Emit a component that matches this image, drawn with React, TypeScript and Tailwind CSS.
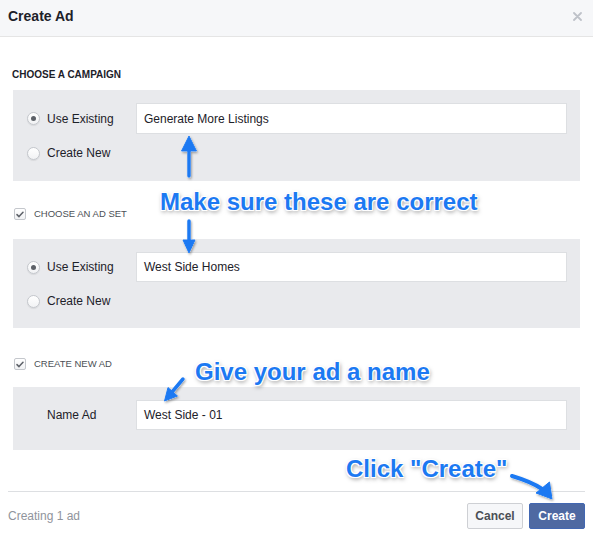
import React from 'react'

function Radio({ checked }: { checked?: boolean }) {
  return (
    <span className="w-[13px] h-[13px] rounded-full border border-[#c4c7cc] bg-gradient-to-b from-white to-[#f1f2f4] shadow-[0_1px_1px_rgba(0,0,0,0.08)] flex items-center justify-center shrink-0">
      {checked && <span className="w-[5px] h-[5px] rounded-full bg-[#5d6168]" />}
    </span>
  )
}

function Check() {
  return (
    <span className="w-[12px] h-[12px] rounded-[2px] border border-[#c4c7cc] bg-gradient-to-b from-white to-[#f1f2f4] flex items-center justify-center shrink-0">
      <svg width="8" height="7" viewBox="0 0 8 7" fill="none">
        <path d="M1 3.6 L3 5.6 L7 1.2" stroke="#5d6168" strokeWidth="1.5" strokeLinecap="round" strokeLinejoin="round" />
      </svg>
    </span>
  )
}

function TextBox({ value, h }: { value: string; h: string }) {
  return (
    <div className={`flex-1 ${h} bg-white border border-[#dddfe2] flex items-center pl-[7px] text-[12px] text-[#1d2129]`}>
      {value}
    </div>
  )
}

function ChoosePanel({ value, h, inputH }: { value: string; h: string; inputH: string }) {
  return (
    <div className={`${h} bg-[#e9eaed] flex pt-[13px] pr-[13px]`}>
      <div className="w-[123px] pl-[14px] flex flex-col text-[12px] text-[#1d2129]">
        <div className={`${inputH} flex items-center gap-[7px]`}>
          <Radio checked />
          <span>Use Existing</span>
        </div>
        <div className="h-[20px] mt-[9px] flex items-center gap-[7px]">
          <Radio />
          <span>Create New</span>
        </div>
      </div>
      <TextBox value={value} h={inputH} />
    </div>
  )
}

const blue = '#1c79f2'
const annotate =
  "absolute whitespace-nowrap text-[24px] leading-[24px] font-bold text-[#1c79f2] [text-shadow:-1px_-1px_0_#fff,1px_-1px_0_#fff,-1px_1px_0_#fff,1px_1px_0_#fff,0_0_3px_#fff,1px_2px_4px_rgba(0,0,0,0.5)]"

function Arrows() {
  const shapes = (
    <>
      <path d="M189 150 L189 176" strokeWidth="3.5" strokeLinecap="round" />
      <polygon points="189,136 181.5,151 196.5,151" />
      <path d="M189 221 L189 242" strokeWidth="3.5" strokeLinecap="round" />
      <polygon points="189,253 183,240 195,240" />
      <path d="M183 379 L172.5 391.5" strokeWidth="3.5" strokeLinecap="round" />
      <polygon points="164.5,401 177.5,396 168,387.5" />
      <path d="M512 476 Q532 482 542 489" strokeWidth="4" strokeLinecap="round" fill="none" />
      <polygon points="552,499 549.5,482 536,493" />
    </>
  )
  return (
    <svg className="absolute inset-0 pointer-events-none" width="593" height="537" viewBox="0 0 593 537">
      <defs>
        <filter id="sh" x="-20%" y="-20%" width="140%" height="140%">
          <feDropShadow dx="1" dy="1.5" stdDeviation="1.2" floodColor="#000" floodOpacity="0.35" />
        </filter>
      </defs>
      <g filter="url(#sh)" stroke="#fff" fill="#fff" strokeLinejoin="round">
        {shapes}
      </g>
      <g stroke={blue} fill={blue}>
        {shapes}
      </g>
    </svg>
  )
}

export default function App() {
  return (
    <div className="relative w-[593px] h-[537px] overflow-hidden bg-white font-['Liberation_Sans',Arial,sans-serif]">
      {/* header */}
      <div className="h-[37px] bg-[#f6f7f9] border-b border-[#e5e5e5] flex items-center justify-between pl-[8px] pr-[10px] pb-[3px]">
        <span className="text-[14px] font-bold text-[#1d2129]">Create Ad</span>
        <svg width="9" height="9" viewBox="0 0 9 9" className="mr-[1px]">
          <path d="M1 1 L8 8 M8 1 L1 8" stroke="#bec2c9" strokeWidth="1.8" strokeLinecap="round" />
        </svg>
      </div>

      {/* body */}
      <div className="px-[13px]">
        <div className="mt-[31px] h-[12px] -ml-[1px] flex items-center text-[10px] font-bold text-[#1d2129]">
          CHOOSE A CAMPAIGN
        </div>
        <div className="mt-[10px]">
          <ChoosePanel value="Generate More Listings" h="h-[91px]" inputH="h-[31px]" />
        </div>

        <div className="mt-[27px] h-[12px] ml-[1px] flex items-center gap-[8px] text-[9.5px] text-[#4b4f56]">
          <Check />
          <span>CHOOSE AN AD SET</span>
        </div>
        <div className="mt-[19px]">
          <ChoosePanel value="West Side Homes" h="h-[89px]" inputH="h-[30px]" />
        </div>

        <div className="mt-[30px] h-[12px] ml-[1px] flex items-center gap-[8px] text-[9.5px] text-[#4b4f56]">
          <Check />
          <span>CREATE NEW AD</span>
        </div>
        <div className="mt-[17px] h-[63px] bg-[#e9eaed] flex pt-[13px] pr-[13px]">
          <div className="w-[123px] pl-[34px] h-[30px] flex items-center text-[12px] text-[#1d2129]">Name Ad</div>
          <TextBox value="West Side - 01" h="h-[30px]" />
        </div>
      </div>

      {/* footer */}
      <div className="mx-[8px] mt-[41px] border-t border-[#dddfe2] pt-[11px] flex items-center justify-between">
        <span className="text-[12px] text-[#90949c]">Creating 1 ad</span>
        <div className="flex gap-[6px]">
          <button className="w-[56px] h-[26px] rounded-[2px] border border-[#ced0d4] bg-[#f6f7f9] text-[12px] font-bold text-[#4b4f56]">
            Cancel
          </button>
          <button className="w-[56px] h-[26px] rounded-[2px] border border-[#4267b2] bg-[#4e69a2] text-[12px] font-bold text-white">
            Create
          </button>
        </div>
      </div>

      {/* annotations */}
      <Arrows />
      <div className={`${annotate} left-[160px] top-[190px]`}>Make sure these are correct</div>
      <div className={`${annotate} left-[195px] top-[360px]`}>Give your ad a name</div>
      <div className={`${annotate} left-[346px] top-[457px]`}>Click "Create"</div>
    </div>
  )
}
